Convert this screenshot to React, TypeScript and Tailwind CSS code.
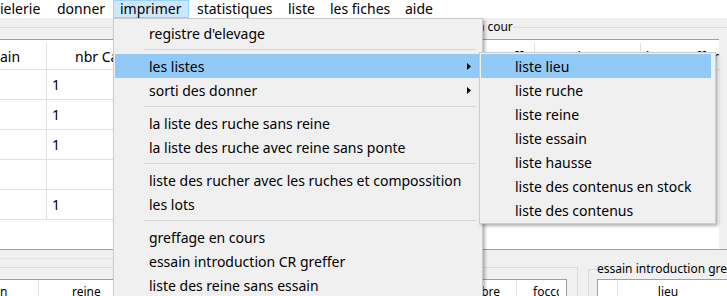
import clsx from 'clsx';

type Item = { label: string; active?: boolean; sub?: boolean } | 'sep';

const menuBar = [
  { label: 'ielerie', cls: 'w-[50px]' },
  { label: 'donner', cls: 'w-[63px] pl-[7px]' },
  { label: 'imprimer', cls: 'w-[76px] pl-[6px] border border-[#99d1ff] bg-[#cce8ff]' },
  { label: 'statistiques', cls: 'w-[92px] pl-[8px]' },
  { label: 'liste', cls: 'w-[42px] pl-[7px]' },
  { label: 'les fiches', cls: 'w-[75px] pl-[7px]' },
  { label: 'aide', cls: 'w-[45px] pl-[7px]' },
];

const printMenu: Item[] = [
  { label: "registre d'elevage" },
  'sep',
  { label: 'les listes', active: true, sub: true },
  { label: 'sorti des donner', sub: true },
  'sep',
  { label: 'la liste des ruche sans reine' },
  { label: 'la liste des ruche avec reine sans ponte' },
  'sep',
  { label: 'liste des rucher avec les ruches et compossition' },
  { label: 'les lots' },
  'sep',
  { label: 'greffage en cours' },
  { label: 'essain introduction CR greffer' },
  { label: 'liste des reine sans essain' },
];

const listMenu = [
  'liste lieu',
  'liste ruche',
  'liste reine',
  'liste essain',
  'liste hausse',
  'liste des contenus en stock',
  'liste des contenus',
];

const rows = ['1', '1', '1', '', '1'];

function Arrow() {
  return (
    <svg width="4" height="7" viewBox="0 0 4 7" className="shrink-0">
      <path d="M0 0L4 3.5L0 7Z" fill="#000" />
    </svg>
  );
}

function MenuRow({ label, active, sub }: { label: string; active?: boolean; sub?: boolean }) {
  return (
    <div
      className={clsx(
        'flex h-[24px] items-center justify-between pl-[34px] pr-[8px] whitespace-nowrap',
        active && 'bg-[#91c9f7]'
      )}
    >
      <span>{label}</span>
      {sub && <Arrow />}
    </div>
  );
}

export default function App() {
  return (
    <div className="relative h-[296px] w-[727px] overflow-hidden bg-[#f0f0f0] font-['Noto_Sans',sans-serif] text-[14px] text-black">
      {/* menu bar */}
      <div className="flex h-[18px] bg-white">
        {menuBar.map((m) => (
          <div key={m.label} className={clsx('flex h-[18px] items-center whitespace-nowrap leading-[16px]', m.cls)}>
            {m.label}
          </div>
        ))}
      </div>

      {/* top groups */}
      <div className="flex h-[231px]">
        <fieldset className="mt-[9px] flex w-[404px] min-w-0 flex-col border-t border-r border-[#dcdcdc] pt-[11px]">
          <div className="flex-1 border-t border-[#a0a0a0] bg-white">
            <div className="flex h-[30px] border-b border-[#e0e0e0] pt-[3px]">
              <div className="flex w-[47px] items-center border-r border-[#e0e0e0]">ain</div>
              <div className="flex flex-1 items-center pl-[28px]">nbr Cadres</div>
            </div>
            {rows.map((r, i) => (
              <div key={i} className="flex h-[30px] border-b border-[#e0e0e0]">
                <div className="w-[47px] border-r border-[#e0e0e0]" />
                <div className="flex flex-1 items-center pl-[5px]">{r}</div>
              </div>
            ))}
          </div>
        </fieldset>
        <fieldset className="ml-[6px] flex min-w-0 flex-1 flex-col border-t border-l border-[#dcdcdc] px-[8px] pt-[3px]">
          <legend className="text-[12px] leading-[18px]">greffage en cour</legend>
          <div className="flex-1 border-t border-[#a0a0a0] bg-white">
            <div className="flex h-[30px] border-b border-[#e0e0e0] pt-[3px]">
              <div className="flex w-[118px] items-center justify-end border-r border-[#e0e0e0] pr-[3px]">ruche greffe</div>
              <div className="flex w-[108px] items-center justify-center border-r border-[#e0e0e0]">date</div>
              <div className="flex flex-1 items-center justify-end whitespace-nowrap">date greffer</div>
            </div>
          </div>
        </fieldset>
      </div>

      {/* bottom groups */}
      <div className="flex border-t border-[#a0a0a0] text-[12px]">
        <div className="flex w-[578px] shrink-0 flex-col">
          <div className="h-[9px] w-[300px] shrink-0 border-b border-[#e3e3e3]" />
          <fieldset className="mt-[8px] min-w-0 shrink-0 border-t border-r border-[#dcdcdc] pt-[11px] pr-[10px]">
            <div className="flex h-[24px] border-t border-r border-[#a0a0a0] bg-white">
              <div className="flex w-[39px] items-center border-r border-[#e0e0e0]">n</div>
              <div className="flex w-[100px] items-center border-r border-[#e0e0e0] pl-[33px]">reine</div>
              <div className="flex w-[378px] items-center justify-end border-r border-[#e0e0e0] pr-[16px]">nombre</div>
              <div className="flex w-[49px] items-center pr-[7px] pl-[16px]">
                <div className="overflow-hidden whitespace-nowrap">foccondation</div>
              </div>
            </div>
          </fieldset>
        </div>
        <fieldset className="mt-[10px] ml-[10px] flex min-w-0 flex-1 flex-col border-t border-l border-[#dcdcdc] pl-[8px] pt-[1px]">
          <legend className="whitespace-nowrap leading-[18px]">essain introduction gre</legend>
          <div className="flex h-[24px] border-t border-l border-[#a0a0a0] bg-white">
            <div className="w-[20px] border-r border-[#e0e0e0]" />
            <div className="flex w-[100px] items-center justify-center">lieu</div>
          </div>
        </fieldset>
      </div>

      {/* imprimer dropdown */}
      <div className="absolute top-[18px] left-[113px] w-[370px] border border-[#cccccc] bg-[#f0f0f0] pt-[2px] pr-[3px] pl-[1px] shadow-[2px_2px_3px_rgba(0,0,0,0.3)]">
        {printMenu.map((it, i) =>
          it === 'sep' ? (
            <div key={i} className="h-[9px] pt-[4px] pr-[3px] pl-[29px]">
              <div className="h-px bg-[#d7d7d7]" />
            </div>
          ) : (
            <MenuRow key={i} {...it} />
          )
        )}
      </div>

      {/* les listes submenu */}
      <div className="absolute top-[52px] left-[479px] w-[237px] border border-[#cccccc] bg-[#f0f0f0] py-[1px] pr-[4px] pl-[1px] shadow-[2px_2px_3px_rgba(0,0,0,0.3)]">
        {listMenu.map((l, i) => (
          <MenuRow key={l} label={l} active={i === 0} />
        ))}
      </div>
    </div>
  );
}
